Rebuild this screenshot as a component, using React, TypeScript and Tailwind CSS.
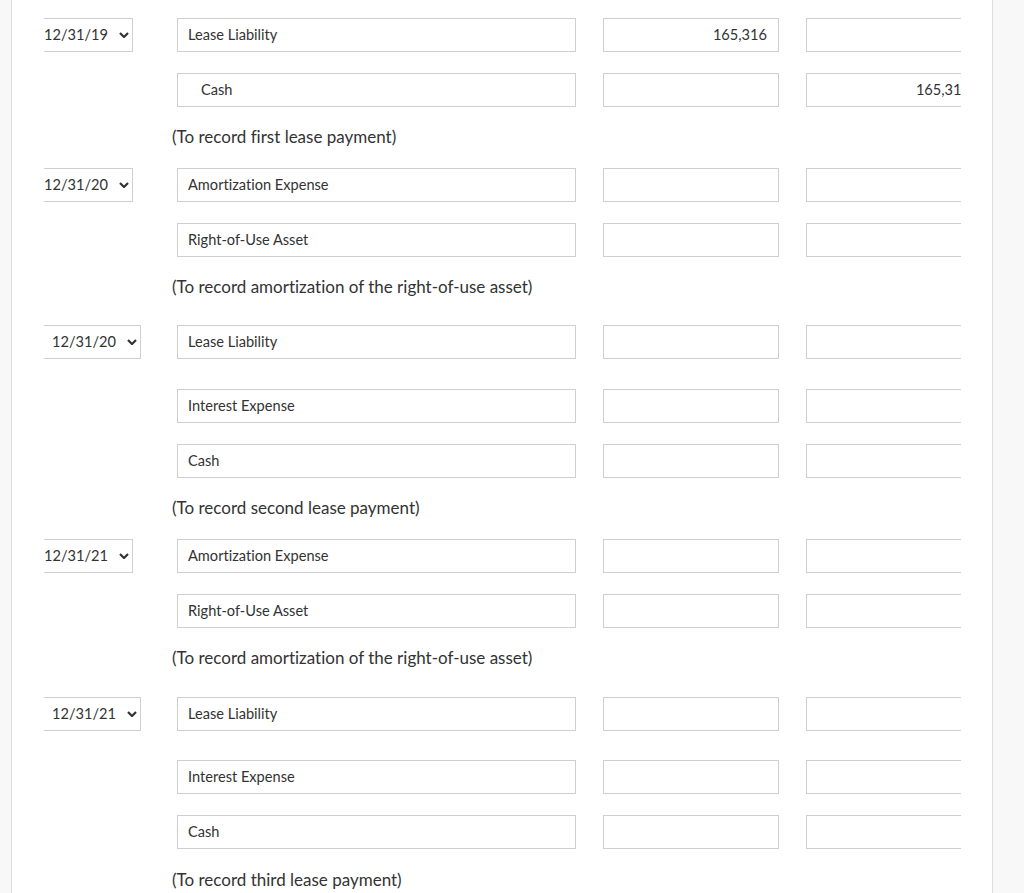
type Line = {
  kind: "line";
  date?: string;
  wide?: boolean;
  account: string;
  indent?: boolean;
  debit?: string;
  credit?: string;
  mt: string;
};
type Note = { kind: "note"; text: string; mt: string };

const entries: (Line | Note)[] = [
  { kind: "line", date: "12/31/19", account: "Lease Liability", debit: "165,316", mt: "mt-0" },
  { kind: "line", account: "Cash", indent: true, credit: "165,316", mt: "mt-[21px]" },
  { kind: "note", text: "(To record first lease payment)", mt: "mt-[18px]" },
  { kind: "line", date: "12/31/20", account: "Amortization Expense", mt: "mt-[19px]" },
  { kind: "line", account: "Right-of-Use Asset", mt: "mt-[21px]" },
  { kind: "note", text: "(To record amortization of the right-of-use asset)", mt: "mt-[18px]" },
  { kind: "line", date: "12/31/20", wide: true, account: "Lease Liability", mt: "mt-[26px]" },
  { kind: "line", account: "Interest Expense", mt: "mt-[30px]" },
  { kind: "line", account: "Cash", mt: "mt-[21px]" },
  { kind: "note", text: "(To record second lease payment)", mt: "mt-[18px]" },
  { kind: "line", date: "12/31/21", account: "Amortization Expense", mt: "mt-[19px]" },
  { kind: "line", account: "Right-of-Use Asset", mt: "mt-[21px]" },
  { kind: "note", text: "(To record amortization of the right-of-use asset)", mt: "mt-[18px]" },
  { kind: "line", date: "12/31/21", wide: true, account: "Lease Liability", mt: "mt-[27px]" },
  { kind: "line", account: "Interest Expense", mt: "mt-[29px]" },
  { kind: "line", account: "Cash", mt: "mt-[21px]" },
  { kind: "note", text: "(To record third lease payment)", mt: "mt-[19px]" },
];

function Chevron() {
  return (
    <svg aria-hidden="true" className="h-[6px] w-[10px] shrink-0" viewBox="0 0 10 6">
      <polyline fill="none" points="1,1 5,5 9,1" stroke="#333" strokeWidth={2.2} />
    </svg>
  );
}

function DateSelect({ date, wide }: { date: string; wide?: boolean }) {
  return (
    <div className="ml-[32px] w-[120px] overflow-hidden">
      <div
        className={`flex h-[34px] w-[101px] items-center justify-between border border-[#cfcfcf] bg-white pl-[11px] pr-[3px] text-[14.6px] text-[#333] ${
          wide ? "-ml-[4px]" : "-ml-[12px]"
        }`}
      >
        <span>{date}</span>
        <Chevron />
      </div>
    </div>
  );
}

function LineRow({ line }: { line: Line }) {
  return (
    <div className={`flex items-start ${line.mt}`}>
      <div className="w-[165px] shrink-0">{line.date ? <DateSelect date={line.date} wide={line.wide} /> : null}</div>
      <div
        className={`flex h-[34px] w-[399px] shrink-0 items-center border border-[#cfcfcf] bg-white text-[14.6px] text-[#333] ${
          line.indent ? "pl-[23px]" : "pl-[10px]"
        }`}
      >
        {line.account}
      </div>
      <div className="ml-[27px] flex h-[34px] w-[176px] shrink-0 items-center justify-end border border-[#cfcfcf] bg-white pr-[11px] text-[14.6px] text-[#333]">
        {line.debit}
      </div>
      <div className="ml-[27px] flex h-[34px] w-[176px] shrink-0 items-center justify-end border border-[#cfcfcf] bg-white pr-[11px] text-[14.6px] text-[#333]">
        {line.credit}
      </div>
    </div>
  );
}

export default function App() {
  return (
    <div className="flex h-[893px] w-[1024px] overflow-hidden bg-white font-['Lato','Liberation_Sans',sans-serif] [font-variant-ligatures:none]">
      <div className="w-[12px] shrink-0 border-r border-[#dedede] bg-[#f8f8f8]" />
      <div className="w-[980px] shrink-0">
        <div className="w-[949px] overflow-hidden pt-[18px]">
          {entries.map((e, i) =>
            e.kind === "note" ? (
              <p key={i} className={`ml-[160px] h-[24px] text-[17px] leading-[24px] text-[#333] ${e.mt}`}>
                {e.text}
              </p>
            ) : (
              <LineRow key={i} line={e} />
            ),
          )}
        </div>
      </div>
      <div className="flex-1 border-l border-[#dedede] bg-[#f8f8f8]" />
    </div>
  );
}
